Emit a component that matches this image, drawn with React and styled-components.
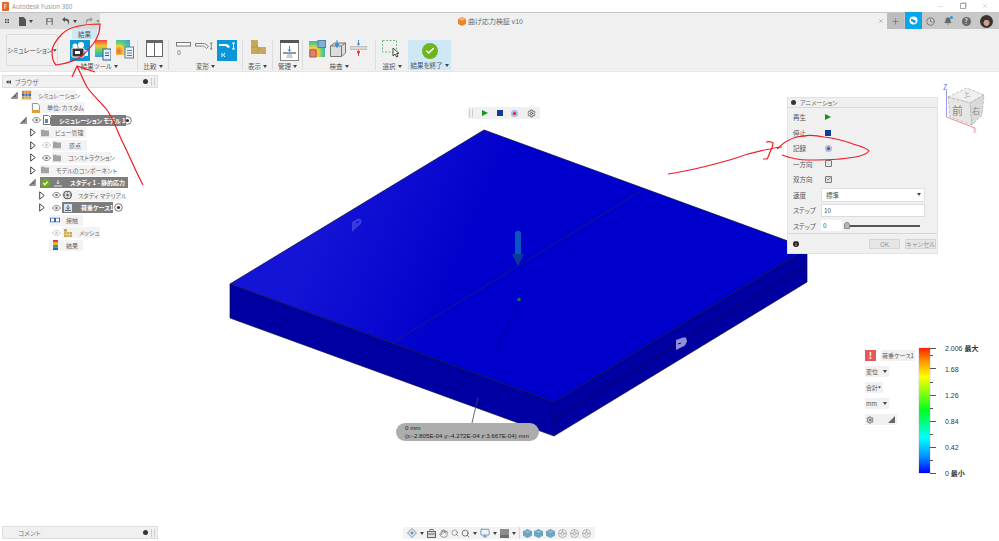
import React from 'react';
import styled, { createGlobalStyle } from 'styled-components';
import { Bell, Check, Clock, Hand, Minus, Monitor, Plus, Search, Settings, X } from 'lucide-react';

const GlobalStyle = createGlobalStyle`
  html, body {
    margin: 0;
    padding: 0;
    background: #fff;
  }
  body {
    font-family: "Noto Sans CJK JP", "Noto Sans", "Liberation Sans", sans-serif;
    font-size: 7px;
    font-feature-settings: "palt";
    color: #555;
    overflow: hidden;
  }
`;

const Caret = () => (
  <svg width="4" height="3" viewBox="0 0 4 3"><path d="M0 0h4L2 3z" fill="#444" /></svg>
);

const Eye = ({ faded }) => (
  <svg width="9" height="6" viewBox="0 0 9 6" opacity={faded ? 0.4 : 1}>
    <path d="M.5 3C2 1 3 .5 4.5.5S7 1 8.5 3C7 5 6 5.500 4.500 5.500S2 5 .5 3z" fill="none" stroke="#777" />
    <circle cx="4.500" cy="3" r="1.300" fill="#777" />
  </svg>
);

const Expander = ({ open }) =>
  open ? (
    <svg width="7" height="7" viewBox="0 0 7 7">
      <path d="M0 6.500L6.500 0v6.500z" fill="#666" stroke="#666" strokeWidth=".4" />
      <path d="M2.500 5.500h3v-3" fill="none" stroke="#ccc" strokeWidth=".5" />
    </svg>
  ) : (
    <svg width="6" height="9" viewBox="0 0 6 9">
      <path d="M.7.8L5.200 4.500.7 8.200z" fill="#fff" stroke="#444" strokeWidth="1" />
    </svg>
  );

const Target = () => (
  <svg width="9" height="9" viewBox="0 0 9 9">
    <circle cx="4.500" cy="4.500" r="3.800" fill="#fff" stroke="#555" strokeWidth=".8" />
    <circle cx="4.500" cy="4.500" r="1.600" fill="#333" />
  </svg>
);

const TreeIcon = ({ kind }) => {
  switch (kind) {
    case 'sim':
      return (
        <svg width="9" height="9" viewBox="0 0 9 9">
          <rect width="9" height="3" fill="#d9822b" />
          <rect y="3" width="9" height="3" fill="#3d6fb0" />
          <rect y="6" width="9" height="3" fill="#c9a53c" />
          <path d="M3 0v9M6 0v9" stroke="#fff" strokeWidth=".6" />
        </svg>
      );
    case 'unit':
      return (
        <svg width="8" height="10" viewBox="0 0 8 10">
          <path d="M.5.500h5l2 2v7h-7z" fill="#fff" stroke="#999" />
          <rect y="7" width="8" height="3" fill="#e0a030" />
        </svg>
      );
    case 'model':
      return (
        <svg width="8" height="10" viewBox="0 0 8 10">
          <path d="M.5.500h5l2 2v7h-7z" fill="#fff" stroke="#777" />
          <rect x="2" y="4" width="3" height="4" fill="#5a86b8" />
        </svg>
      );
    case 'folder':
      return (
        <svg width="8" height="7" viewBox="0 0 8 7">
          <path d="M0 0h3l1 1h4v6H0z" fill="#a3a3a3" />
        </svg>
      );
    case 'check':
      return (
        <svg width="9" height="9" viewBox="0 0 9 9">
          <circle cx="4.500" cy="4.500" r="4.500" fill="#6fae1e" />
          <path d="M2.300 4.600l1.500 1.500 2.900-3" fill="none" stroke="#fff" strokeWidth="1.200" />
        </svg>
      );
    case 'study':
      return (
        <svg width="8" height="8" viewBox="0 0 8 8">
          <path d="M0 7h8" stroke="#eee" strokeWidth="1" />
          <path d="M4 1v3.500M2.800 3.500L4 5l1.200-1.500" stroke="#eee" strokeWidth=".9" fill="none" />
        </svg>
      );
    case 'material':
      return (
        <svg width="9" height="9" viewBox="0 0 9 9">
          <circle cx="4.500" cy="4.500" r="4" fill="#ddd" stroke="#555" />
          <circle cx="4.500" cy="4.500" r="1.200" fill="#555" />
          <path d="M4.500 1v1M4.500 7v1M1 4.500h1M7 4.500h1" stroke="#555" />
        </svg>
      );
    case 'load':
      return (
        <svg width="8" height="8" viewBox="0 0 8 8">
          <rect width="8" height="8" fill="#d8e4ee" />
          <path d="M4 1v4M2.500 3.500L4 5.500l1.500-2" stroke="#2d6db0" fill="none" />
          <rect x="1" y="6" width="6" height="1" fill="#666" />
        </svg>
      );
    case 'contact':
      return (
        <svg width="10" height="5" viewBox="0 0 10 5">
          <rect x=".5" y=".5" width="4" height="4" fill="#fff" stroke="#3d5fb0" />
          <rect x="5.500" y=".5" width="4" height="4" fill="#fff" stroke="#3d5fb0" />
        </svg>
      );
    case 'mesh':
      return (
        <svg width="8" height="8" viewBox="0 0 8 8">
          <path d="M0 0h3v3h5v5H0z" fill="#c9a94f" />
          <path d="M0 3h3M0 5.500h8M3 3v5M5.500 3v5" stroke="#fff" strokeWidth=".4" />
        </svg>
      );
    case 'result':
      return (
        <svg width="5" height="10" viewBox="0 0 5 10">
          <rect width="5" height="2.500" fill="#e23a2e" />
          <rect y="2.500" width="5" height="2.500" fill="#f0b323" />
          <rect y="5" width="5" height="2.500" fill="#3aa655" />
          <rect y="7.500" width="5" height="2.500" fill="#2b5fc0" />
        </svg>
      );
    default:
      return null;
  }
};

const treeRows = [
  { indent: 11, exp: 'open', slot: 10, icon: 'sim', iconAt: 1, labelAt: 17, width: 55, label: 'シミュレーション' },
  { indent: 31, icon: 'unit', iconAt: 1, labelAt: 16, width: 54, label: '単位: カスタム' },
  { indent: 20, exp: 'open', slot: 10, eye: 'on', icon: 'model', iconAt: 1, labelAt: 8, width: 80, label: 'シミュレーション モデル 1', labelDark: true, target: true },
  { indent: 30, exp: 'closed', slot: 10, icon: 'folder', iconAt: 1, labelAt: 15, width: 46, label: 'ビュー管理' },
  { indent: 30, exp: 'closed', slot: 10, eye: 'faded', icon: 'folder', iconAt: 1, labelAt: 17, width: 35, label: '原点' },
  { indent: 30, exp: 'closed', slot: 10, eye: 'on', icon: 'folder', iconAt: 1, labelAt: 16, width: 59, label: 'コンストラクション' },
  { indent: 30, exp: 'closed', slot: 10, icon: 'folder', iconAt: 1, labelAt: 16, width: 70, label: 'モデルのコンポーネント' },
  { indent: 29, exp: 'open', slot: 11, icon: 'check', iconAt: 1, labelAt: 30, width: 88, label: 'スタディ 1 - 静的応力', chipDark: true, extra: 'study' },
  { indent: 39, exp: 'closed', slot: 11, eye: 'on', icon: 'material', iconAt: 1, labelAt: 16, width: 59, label: 'スタディ マテリアル' },
  { indent: 39, exp: 'closed', slot: 11, eye: 'on', icon: 'load', iconAt: 2, labelAt: 19, width: 51, label: '荷重ケース1', chipDark: true, target: true },
  { indent: 49, icon: 'contact', iconAt: 1, labelAt: 17, width: 34, label: '接触' },
  { indent: 50, eye: 'faded', icon: 'mesh', iconAt: 2, labelAt: 17, width: 38, label: 'メッシュ' },
  { indent: 49, icon: 'result', iconAt: 4, labelAt: 17, width: 34, label: '結果' },
];

const ribbonGroups = [
  { width: 76, gap: 5, pad: 8, label: '結果ツール', icons: ['camera', 'rainbowDoc', 'contourDoc'] },
  { width: 31, pad: 8, label: '比較', icons: ['compare'] },
  { width: 74, gap: 4, pad: 7, label: '変形', icons: ['bar0', 'barBent', 'barBlue'] },
  { width: 30, pad: 8, label: '表示', icons: ['tan'] },
  { width: 30, pad: 7, label: '管理', icons: ['manage'] },
  { width: 73, gap: 4, pad: 6, label: '検査', icons: ['contourBox', 'boxArrow', 'section'] },
  { width: 32, pad: 6, label: '選択', icons: ['selectBox'], noBorder: true },
];

const RibbonIcon = ({ kind }) => {
  switch (kind) {
    case 'camera':
      return (
        <svg width="20" height="21" viewBox="0 0 20 21">
          <rect width="20" height="21" fill="#0a96d8" />
          <rect x="2" y="8" width="12" height="9" rx="1" fill="#333" stroke="#fff" />
          <circle cx="5" cy="6" r="2.500" fill="#fff" />
          <circle cx="11" cy="5" r="3" fill="#fff" />
          <rect x="5" y="11" width="5" height="3" fill="#fff" />
          <rect x="15" y="10" width="3" height="6" fill="#fff" />
        </svg>
      );
    case 'rainbowDoc':
      return (
        <svg width="16" height="21" viewBox="0 0 16 21">
          <defs>
            <linearGradient id="rb" x1="0" y1="0" x2="0" y2="1">
              <stop offset="0" stopColor="#f0483a" />
              <stop offset=".35" stopColor="#f7c62f" />
              <stop offset=".65" stopColor="#58d06a" />
              <stop offset="1" stopColor="#2f9ee8" />
            </linearGradient>
          </defs>
          <rect width="12" height="17" fill="url(#rb)" />
          <rect x="8" y="9" width="8" height="11" fill="#e8eef4" stroke="#2d5f98" />
          <path d="M10 13h4M10 15.500h4" stroke="#2d5f98" />
        </svg>
      );
    case 'contourDoc':
      return (
        <svg width="18" height="19" viewBox="0 0 18 19">
          <defs>
            <radialGradient id="ct" cx=".2" cy=".75" r="1">
              <stop offset="0" stopColor="#ef5b3f" />
              <stop offset=".35" stopColor="#f6d03a" />
              <stop offset=".6" stopColor="#59cf7a" />
              <stop offset="1" stopColor="#3aa2e8" />
            </radialGradient>
          </defs>
          <rect width="14" height="15" fill="url(#ct)" />
          <rect x="9" y="7" width="8.500" height="11" fill="#eef2f5" stroke="#5a7f9c" />
          <path d="M11 10.500h5M11 13h5M11 15.500h5" stroke="#5a7f9c" />
        </svg>
      );
    case 'compare':
      return (
        <svg width="17" height="17" viewBox="0 0 17 17">
          <rect x=".5" y=".5" width="16" height="16" fill="#fff" stroke="#666" />
          <rect width="17" height="3" fill="#666" />
          <path d="M8.500 3v14" stroke="#666" />
        </svg>
      );
    case 'bar0':
      return (
        <svg width="15" height="17" viewBox="0 0 15 17">
          <rect x=".5" y="2.500" width="14" height="3.500" fill="#fff" stroke="#777" />
          <text x="1" y="15" fontSize="7" fill="#666">0</text>
        </svg>
      );
    case 'barBent':
      return (
        <svg width="18" height="14" viewBox="0 0 18 14">
          <path d="M.5 3.500h7c3 0 4 1 6 3l-2 2c-2-2-2.500-2.500-4-2.500h-7z" fill="#fff" stroke="#777" />
          <path d="M15 3h2.500M16.200 3v6M15 9h2.500" stroke="#666" strokeWidth=".8" fill="none" />
        </svg>
      );
    case 'barBlue':
      return (
        <svg width="20" height="21" viewBox="0 0 20 21">
          <rect width="20" height="21" fill="#0a96d8" />
          <path d="M2 4h6c3 0 4 1 5 3l-2 1c-1-1-2-2-3-2H2z" fill="#fff" />
          <path d="M15 3h3M16.500 3v6M15 9h3" stroke="#fff" fill="none" />
          <path d="M5 13v4M8 13l-1.500 2L8 17" stroke="#fff" fill="none" />
        </svg>
      );
    case 'tan':
      return (
        <svg width="15" height="14" viewBox="0 0 15 14">
          <path d="M0 0h7v7h8v7H0z" fill="#c9a95c" />
          <path d="M0 0l14 14M0 7h7v7" stroke="#b2934a" fill="none" strokeWidth=".7" />
        </svg>
      );
    case 'manage':
      return (
        <svg width="19" height="21" viewBox="0 0 19 21">
          <rect x=".5" y=".5" width="18" height="20" fill="#fff" stroke="#888" />
          <rect width="19" height="3" fill="#555" />
          <path d="M9.500 6v5M8 9.500l1.500 2 1.500-2" stroke="#2d8fd0" fill="none" />
          <rect x="3" y="12" width="13" height="2" fill="#999" />
          <path d="M6 18l1.500-4h4l1.500 4z" fill="#ccc" />
        </svg>
      );
    case 'contourBox':
      return (
        <svg width="17" height="18" viewBox="0 0 17 18">
          <defs>
            <radialGradient id="cb" cx=".25" cy=".75" r=".9">
              <stop offset="0" stopColor="#ef5b3f" />
              <stop offset=".4" stopColor="#f6d03a" />
              <stop offset=".65" stopColor="#59cf7a" />
              <stop offset="1" stopColor="#3aa2e8" />
            </radialGradient>
          </defs>
          <rect y="1" width="16" height="16" fill="url(#cb)" />
          <rect x="9" y=".5" width="7.500" height="7" fill="#7fb0d8" stroke="#5a7f9c" />
          <rect x="1" y="10" width="6" height="7" fill="#e88070" stroke="#a05a50" />
        </svg>
      );
    case 'boxArrow':
      return (
        <svg width="16" height="17" viewBox="0 0 16 17">
          <path d="M.5 6l4-3h11v10l-4 3.500H.5z" fill="#ddd" stroke="#777" />
          <path d="M.5 6h11v10.500M11.500 6l4-3" fill="none" stroke="#777" />
          <path d="M7 0v6M5 4l2 3.500L9 4z" stroke="#3a8ed0" fill="#3a8ed0" />
        </svg>
      );
    case 'section':
      return (
        <svg width="17" height="17" viewBox="0 0 17 17">
          <path d="M8.500 0v5" stroke="#3a8ed0" />
          <path d="M6.800 3.500L8.500 6l1.700-2.500z" fill="#3a8ed0" />
          <rect y="6.500" width="17" height="3" fill="#d8d8d8" stroke="#999" strokeWidth=".5" />
          <path d="M8.500 10v6" stroke="#c44" />
          <circle cx="8.500" cy="12" r="1.500" fill="#d33" />
        </svg>
      );
    case 'selectBox':
      return (
        <svg width="18" height="18" viewBox="0 0 18 18">
          <rect x=".5" y=".5" width="14" height="11.500" fill="none" stroke="#6cc07a" strokeDasharray="2 1.500" />
          <path d="M11 8l0 8 2-2 1.500 3 1.500-.7-1.500-2.800 2.500-.2z" fill="#fff" stroke="#444" />
        </svg>
      );
    default:
      return null;
  }
};

const NavGlyph = ({ kind }) => {
  switch (kind) {
    case 'orbit':
      return (
        <svg width="10" height="10" viewBox="0 0 10 10">
          <path d="M5 .5L9.500 5 5 9.500.5 5z" fill="#cfe2f2" stroke="#777" strokeWidth=".7" />
          <circle cx="5" cy="5" r="1.300" fill="#5a8fc0" />
        </svg>
      );
    case 'cam':
      return (
        <svg width="9" height="9" viewBox="0 0 9 9">
          <rect x=".5" y="2.500" width="8" height="6" fill="#ddd" stroke="#666" />
          <rect x="3" y=".5" width="3" height="2" fill="none" stroke="#666" />
          <path d="M.5 5h8" stroke="#666" />
        </svg>
      );
    case 'screen':
      return (
        <svg width="9" height="9" viewBox="0 0 9 9">
          <rect width="9" height="9" fill="#8c8c8c" />
          <rect y="6" width="9" height="3" fill="#6f6f6f" />
        </svg>
      );
    case 'cube':
      return (
        <svg width="9" height="9" viewBox="0 0 9 9">
          <path d="M4.500 0L9 2.200v4.600L4.500 9 0 6.800V2.200z" fill="#6ea5bf" />
          <path d="M0 2.200l4.500 2.200L9 2.200" fill="#9cc4d6" stroke="#4d8aa8" strokeWidth=".4" />
        </svg>
      );
    case 'view':
      return (
        <svg width="9" height="9" viewBox="0 0 9 9">
          <circle cx="4.500" cy="4.500" r="4" fill="none" stroke="#999" strokeWidth=".7" />
          <circle cx="4.500" cy="4.500" r="1.600" fill="none" stroke="#999" strokeWidth=".7" />
          <path d="M4.500 .5v3M.5 4.500h3M8.500 4.500h-3" stroke="#999" strokeWidth=".6" />
        </svg>
      );
    default:
      return null;
  }
};

const Model = () => (
  <ModelSvg viewBox="0 72 999 469">
    <defs>
      <linearGradient id="topFace" gradientUnits="userSpaceOnUse" x1="300" y1="270" x2="440" y2="330">
        <stop offset="0" stopColor="#1414d6" />
        <stop offset="1" stopColor="#0000cc" />
      </linearGradient>
    </defs>
    <path d="M230 284L230 318 554 436 807 282 807 248 554 402z" fill="#0000a2" stroke="#10104a" strokeWidth=".7" />
    <path d="M230 284L484 130 807 248 554 402z" fill="url(#topFace)" stroke="#10104a" strokeWidth=".8" />
    <path d="M554 402v34M554 419L807 265" stroke="#10104a" strokeWidth=".7" fill="none" />
    <path d="M392 343L641 191" stroke="#202068" strokeWidth=".8" />
    <path d="M352 232V222L358 218.500C362 218 362 222 361 224L356 228z" fill="#3a3ae0" />
    <path d="M356 223l3-1.500" stroke="#0000cc" />
    <path d="M676 350V340L683 337.500H686L687 341.500 685 345.500z" fill="#8f8fd6" />
    <path d="M678 344l3-1" stroke="#0000a2" />
    <path d="M519 299L497 352" stroke="#00008c" strokeWidth=".7" />
    <path d="M478 397L472 423" stroke="#444" strokeWidth=".8" />
    <rect x="515" y="231" width="6" height="26" rx="2" fill="#0b55c2" />
    <path d="M512 254h12l-6 12z" fill="#083a9a" />
    <circle cx="519" cy="299.500" r="1.800" fill="#0f7a50" />
  </ModelSvg>
);

const Markup = () => (
  <MarkupSvg viewBox="0 0 999 541" fill="none" stroke="#ee1c25" strokeWidth="1.200">
    <path d="M100 24C88 24 70 26 62 34 56 40 52 47 52 52 52 60 55 64 56 65 66 64 78 60 84 54 92 46 100 38 100 24z" />
    <path d="M72 77L77 66 95 72M77 66C80 72 84 82 87 87 93 96 101 102 107 110 114 120 118 133 123 143 130 157 136 172 143 185" />
    <path d="M668 174C690 171 712 165 733 159 746 154 758 151 770 149 774 148 778 147 782 147" />
    <path d="M766 142C770 141 772 142 773 143 773 147 771 150 770 152 769 155 768 158 767 159L763 159" />
    <path d="M777 149C783 143 788 139 797 137 805 135 815 135 824 137 834 138 845 141 853 144 860 146 868 149 869 151 866 155 858 157 848 158 836 160 822 160 808 160 798 160 790 158 782 155" />
  </MarkupSvg>
);

const App = () => (
  <Page>
    <GlobalStyle />
    <TitleBar>
      <AppLogo>F</AppLogo>
      <AppName>Autodesk Fusion 360</AppName>
      <WindowControls>
        <Minus size={7} strokeWidth={1} />
        <RestoreBox />
        <X size={8} strokeWidth={1} />
      </WindowControls>
    </TitleBar>

    <TabStrip>
      <QuickBar>
        <svg width="8" height="8" viewBox="0 0 8 8" fill="#444">
          <rect width="2" height="2" /><rect x="3" width="2" height="2" /><rect x="6" width="2" height="2" />
          <rect y="3" width="2" height="2" /><rect x="3" y="3" width="2" height="2" /><rect x="6" y="3" width="2" height="2" />
          <rect y="6" width="2" height="2" /><rect x="3" y="6" width="2" height="2" /><rect x="6" y="6" width="2" height="2" />
        </svg>
        <QuickItem $left={10}>
          <svg width="7" height="9" viewBox="0 0 7 9"><path d="M0 0h4.500L7 2.500V9H0z" fill="#555" /></svg>
          <Caret />
        </QuickItem>
        <QuickItem $left={13}>
          <svg width="7" height="7" viewBox="0 0 7 7"><rect width="7" height="7" fill="#8a8a8a" /><rect x="2" y="1" width="3" height="2" fill="#ddd" /><rect x="1.500" y="4" width="4" height="3" fill="#ddd" /></svg>
        </QuickItem>
        <QuickItem $left={9}>
          <svg width="8" height="8" viewBox="0 0 8 8"><path d="M3 0L0 2.500 3 5V3.500C5 3.500 6.500 4.500 6.500 8 8 5 7.500 1.500 3 1.500z" fill="#555" /></svg>
          <Caret />
        </QuickItem>
        <QuickItem $left={8} $faded>
          <svg width="8" height="8" viewBox="0 0 8 8"><path d="M5 0l3 2.500L5 5V3.500C3 3.500 1.500 4.500 1.500 8 0 5 .5 1.500 5 1.500z" fill="#555" /></svg>
          <Caret />
        </QuickItem>
      </QuickBar>
      <DocTab>
        <DocTitle>
          <svg width="8" height="9" viewBox="0 0 8 9">
            <path d="M4 0l4 2v5L4 9 0 7V2z" fill="#e8862e" />
            <path d="M0 2l4 2 4-2-4-2z" fill="#f5b06a" />
          </svg>
          曲げ応力検証 v10
        </DocTitle>
        <TabClose><X size={6} strokeWidth={1.500} /></TabClose>
      </DocTab>
      <AccountBar>
        <AddTab><Plus size={9} strokeWidth={2} /></AddTab>
        <BlueTool>
          <svg width="9" height="9" viewBox="0 0 9 9">
            <circle cx="4.500" cy="4.500" r="4" fill="#fff" />
            <path d="M2 2.500l4.500 2v3L2 5z" fill="#0aa0e6" />
          </svg>
        </BlueTool>
        <AccountIcons>
          <Clock size={9} strokeWidth={2} />
          <BellWrap>
            <Bell size={8} strokeWidth={2} fill="#666" />
            <BellDot />
          </BellWrap>
          <HelpMark>?</HelpMark>
          <Avatar />
        </AccountIcons>
      </AccountBar>
    </TabStrip>

    <Ribbon>
      <WorkspaceButton>
        シミュレーション <Caret />
      </WorkspaceButton>
      {ribbonGroups.map(group => (
        <RibbonGroup key={group.label} $width={group.width} $noBorder={group.noBorder}>
          <RibbonIcons $gap={group.gap} $pad={group.pad}>
            {group.icons.map(icon => <RibbonIcon key={icon} kind={icon} />)}
          </RibbonIcons>
          <RibbonLabel>{group.label} <Caret /></RibbonLabel>
        </RibbonGroup>
      ))}
      <FinishGroup>
        <FinishIcon><Check size={10} strokeWidth={3.500} color="#fff" /></FinishIcon>
        <RibbonLabel>結果を終了 <Caret /></RibbonLabel>
      </FinishGroup>
      <ResultTip>結果</ResultTip>
    </Ribbon>

    <Canvas>
      <Model />

      <BrowserPanel>
        <PanelBar>
          <PanelTitle>
            <svg width="5" height="4" viewBox="0 0 5 4"><path d="M2.500 0v4L0 2zM5 0v4L2.500 2z" fill="#444" /></svg>
            ブラウザ
          </PanelTitle>
          <PanelGrip>
            <PanelDot />
            <GripLine />
          </PanelGrip>
        </PanelBar>
        <Tree>
          {treeRows.map(row => (
            <TreeRow key={row.label} $indent={row.indent}>
              {row.exp && <ExpanderSlot $width={row.slot}><Expander open={row.exp === 'open'} /></ExpanderSlot>}
              {row.eye && <EyeSlot><Eye faded={row.eye === 'faded'} /></EyeSlot>}
              <Chip $width={row.width} $dark={row.chipDark}>
                <ChipIcon $at={row.iconAt}><TreeIcon kind={row.icon} /></ChipIcon>
                {row.extra && <ChipExtra><TreeIcon kind={row.extra} /></ChipExtra>}
                <ChipLabel $at={row.labelAt} $dark={row.labelDark} $light={row.chipDark || row.labelDark}>
                  {row.label}
                </ChipLabel>
              </Chip>
              {row.target && <TargetSlot><Target /></TargetSlot>}
            </TreeRow>
          ))}
        </Tree>
      </BrowserPanel>

      <PlayBar>
        <GripLine />
        <PlayIcon />
        <StopIcon />
        <RecordIcon />
        <Settings size={9} strokeWidth={2.500} color="#555" />
      </PlayBar>

      <AnimationDialog>
        <DialogHeader>
          <PanelDot />
          アニメーション
        </DialogHeader>
        <DialogBody>
          <DialogRow $height={16}><RowLabel>再生</RowLabel><PlayIcon /></DialogRow>
          <DialogRow $height={15}><RowLabel>停止</RowLabel><StopIcon /></DialogRow>
          <DialogRow $height={16}><RowLabel>記録</RowLabel><RecordIcon /></DialogRow>
          <DialogRow $height={15}><RowLabel>一方向</RowLabel><CheckBox /></DialogRow>
          <DialogRow $height={16}>
            <RowLabel>双方向</RowLabel>
            <CheckBox><Check size={6} strokeWidth={3} color="#333" /></CheckBox>
          </DialogRow>
          <DialogRow $height={15}>
            <RowLabel $narrow>速度</RowLabel>
            <SelectBox>標準<Caret /></SelectBox>
          </DialogRow>
          <DialogRow $height={16}>
            <RowLabel $narrow>ステップ</RowLabel>
            <TextBox>10</TextBox>
          </DialogRow>
          <DialogRow $height={15}>
            <RowLabel $narrow>ステップ</RowLabel>
            <SliderValue>0</SliderValue>
            <Slider>
              <SliderThumb />
            </Slider>
          </DialogRow>
        </DialogBody>
        <DialogFooter>
          <InfoDot>i</InfoDot>
          <DialogButton $width={31}>OK</DialogButton>
          <DialogButton $width={31}>キャンセル</DialogButton>
        </DialogFooter>
      </AnimationDialog>

      <ViewCube viewBox="940 80 50 54">
        <path d="M948 97L967 88 984 95 970 103z" fill="#efefef" stroke="#aaa" strokeDasharray="3 1.500" strokeWidth=".7" />
        <path d="M948 97L970 103 972 125 950 117z" fill="#e6e6e6" stroke="#aaa" strokeDasharray="3 1.500" strokeWidth=".7" />
        <path d="M970 103L984 95 982 115 972 125z" fill="#dadada" stroke="#aaa" strokeDasharray="3 1.500" strokeWidth=".7" />
        <path d="M946.500 90V117" fill="none" stroke="#9a9af0" strokeWidth="1" />
        <path d="M946.500 117L975 128" fill="none" stroke="#ee8a8a" strokeWidth="1" />
        <text x="943" y="90" fontSize="7" fill="#6a6af0">Z</text>
        <text x="973" y="133" fontSize="6" fill="#ee8a8a">X</text>
        <text x="963" y="97" fontSize="7" fill="#999" transform="rotate(-18 967 94)">上</text>
        <text x="952" y="115" fontSize="11" fill="#888">前</text>
        <text x="972" y="114" fontSize="8" fill="#888">右</text>
      </ViewCube>

      <ProbeTip>
        <div>0 mm</div>
        <div>(x:-2.805E-04 y:-4.272E-04 z:3.667E-04) mm</div>
      </ProbeTip>

      <Legend>
        <LegendControls>
          <LegendTop>
            <AlertBox>!</AlertBox>
            <LegendChip $width={34}>荷重ケース1<Caret /></LegendChip>
          </LegendTop>
          <LegendChip $width={24}>変位<Caret /></LegendChip>
          <LegendChip $width={18}>合計<Caret /></LegendChip>
          <LegendChip $width={24}>mm<Caret /></LegendChip>
          <LegendChip $width={32}>
            <Settings size={8} strokeWidth={2.500} color="#555" />
            <svg width="7" height="7" viewBox="0 0 7 7"><path d="M0 7L7 0v7z" fill="#666" /></svg>
          </LegendChip>
        </LegendControls>
        <ColorBar />
        <svg width="6" height="126" viewBox="0 0 6 126" stroke="#555">
          {[0, 7, 20, 34, 47, 60, 73, 86, 99, 112, 125].map((y, i) => (
            <path key={y} d={`M0 ${y + 0.5}h${i % 2 === 0 ? 6 : 3}`} />
          ))}
        </svg>
        <Scale>
          <ScaleMark $height={20.500}>2.006 <b>最大</b></ScaleMark>
          <ScaleMark $height={26.500}>1.68</ScaleMark>
          <ScaleMark $height={26}>1.26</ScaleMark>
          <ScaleMark $height={26}>0.84</ScaleMark>
          <ScaleMark $height={26}>0.42</ScaleMark>
          <ScaleMark $height={0}>0 <b>最小</b></ScaleMark>
        </Scale>
      </Legend>

      <CommentPanel>
        <PanelBar>
          <PanelTitle $indent={12}>コメント</PanelTitle>
          <PanelGrip>
            <PanelDot />
            <GripLine />
          </PanelGrip>
        </PanelBar>
      </CommentPanel>

      <NavBar>
        <NavGlyph kind="orbit" /><Caret />
        <NavGlyph kind="cam" />
        <Hand size={9} strokeWidth={1.500} color="#555" />
        <Search size={8} strokeWidth={1.500} color="#555" />
        <Search size={9} strokeWidth={2} color="#555" /><Caret />
        <Monitor size={10} strokeWidth={2} color="#5a86b8" /><Caret />
        <NavGlyph kind="screen" /><Caret />
        <NavDivider />
        <NavGlyph kind="cube" />
        <NavGlyph kind="cube" />
        <NavGlyph kind="cube" />
        <NavGlyph kind="view" />
        <NavGlyph kind="view" />
        <NavGlyph kind="view" />
      </NavBar>
    </Canvas>

    <Markup />
  </Page>
);

export default App;

const Page = styled.div`
  position: relative;
  width: 999px;
  height: 541px;
  display: flex;
  flex-direction: column;
  overflow: hidden;
`;

const TitleBar = styled.div`
  height: 12px;
  display: flex;
  align-items: center;
  padding-left: 2px;
  background: #fff;
`;

const AppLogo = styled.div`
  width: 7px;
  height: 9px;
  background: #e8622a;
  color: #fff;
  font-size: 6px;
  line-height: 9px;
  text-align: center;
  border-radius: 1px;
`;

const AppName = styled.span`
  margin-left: 3px;
  font-size: 6.200px;
  color: #999;
  font-family: "Noto Sans", sans-serif;
`;

const WindowControls = styled.div`
  margin-left: auto;
  width: 52px;
  margin-right: 10px;
  display: flex;
  justify-content: space-between;
  align-items: center;
  color: #999;
`;

const RestoreBox = styled.div`
  width: 4px;
  height: 4px;
  border: 1px solid #aaa;
  box-shadow: 1px -1px 0 -0.500px #aaa;
`;

const TabStrip = styled.div`
  height: 17px;
  display: flex;
  background: #d4d4d4;
  border-top: 1px solid #c4c4c4;
  box-sizing: border-box;
`;

const QuickBar = styled.div`
  width: 100px;
  display: flex;
  align-items: center;
  padding-left: 5px;
  box-sizing: border-box;
  background: #d9d9d9;
`;

const QuickItem = styled.div`
  display: flex;
  align-items: center;
  gap: 3px;
  margin-left: ${p => p.$left}px;
  opacity: ${p => (p.$faded ? 0.45 : 1)};
`;

const DocTab = styled.div`
  position: relative;
  flex: 1;
  display: flex;
  align-items: center;
  justify-content: center;
  padding-right: 6px;
  background: #f0f0f0;
`;

const DocTitle = styled.div`
  display: flex;
  align-items: center;
  gap: 2px;
  font-size: 7px;
  color: #666;
`;

const TabClose = styled.div`
  position: absolute;
  right: 3px;
  top: 5px;
  display: flex;
  color: #666;
`;

const AccountBar = styled.div`
  width: 112px;
  display: flex;
  background: #c8c8c8;
`;

const AddTab = styled.div`
  width: 17px;
  display: flex;
  align-items: center;
  justify-content: center;
  background: #bdbdbd;
  color: #777;
`;

const BlueTool = styled.div`
  width: 17px;
  margin: -1px 0 0 1px;
  display: flex;
  align-items: center;
  justify-content: center;
  background: #0aa6ec;
`;

const AccountIcons = styled.div`
  flex: 1;
  display: flex;
  align-items: center;
  justify-content: space-between;
  padding: 0 6px 0 4px;
  color: #666;
`;

const BellWrap = styled.div`
  position: relative;
  display: flex;
`;

const BellDot = styled.span`
  position: absolute;
  right: -1px;
  top: -1px;
  width: 3px;
  height: 3px;
  border-radius: 50%;
  background: #0aa6ec;
`;

const HelpMark = styled.div`
  width: 9px;
  height: 9px;
  border-radius: 50%;
  background: #666;
  color: #ddd;
  font-size: 7px;
  font-weight: 700;
  line-height: 9px;
  text-align: center;
`;

const Avatar = styled.div`
  width: 13px;
  height: 13px;
  border-radius: 50%;
  background: radial-gradient(circle at 50% 60%, #c9a08a 0 28%, #3b3230 32%);
`;

const Ribbon = styled.div`
  position: relative;
  height: 43px;
  display: flex;
  align-items: stretch;
  padding-left: 6px;
  background: #f0f0f0;
  border-bottom: 1px solid #e6e6e6;
  box-sizing: border-box;
`;

const WorkspaceButton = styled.div`
  width: 52px;
  height: 32px;
  margin: 5px 4px 0 0;
  display: flex;
  align-items: center;
  justify-content: center;
  gap: 1px;
  flex-shrink: 0;
  box-sizing: border-box;
  border: 1px solid #dcdcdc;
  border-radius: 2px;
  font-size: 6.500px;
  color: #444;
  white-space: nowrap;
`;

const RibbonGroup = styled.div`
  width: ${p => p.$width}px;
  margin: 11px 0 1px;
  display: flex;
  flex-direction: column;
  justify-content: space-between;
  flex-shrink: 0;
  box-sizing: border-box;
  border-right: ${p => (p.$noBorder ? 'none' : '1px solid #dcdcdc')};
`;

const RibbonIcons = styled.div`
  display: flex;
  align-items: flex-start;
  gap: ${p => p.$gap || 0}px;
  padding-left: ${p => p.$pad}px;
`;

const RibbonLabel = styled.div`
  display: flex;
  align-items: center;
  justify-content: center;
  gap: 2px;
  height: 8px;
  font-size: 6.500px;
  color: #555;
  white-space: nowrap;
`;

const FinishGroup = styled.div`
  width: 43px;
  margin: 11px 0 1px 0;
  padding: 3px 0 1px;
  display: flex;
  flex-direction: column;
  align-items: center;
  justify-content: space-between;
  flex-shrink: 0;
  box-sizing: border-box;
  background: #cfe8f5;
`;

const FinishIcon = styled.div`
  width: 16px;
  height: 16px;
  display: flex;
  align-items: center;
  justify-content: center;
  border-radius: 50%;
  background: #6fb51e;
`;

const ResultTip = styled.div`
  position: absolute;
  left: 72px;
  top: 0;
  width: 25px;
  height: 10px;
  background: #cfe8f5;
  color: #555;
  font-size: 6.500px;
  line-height: 10px;
  text-align: center;
`;

const Canvas = styled.div`
  position: relative;
  flex: 1;
  background: #fff;
`;

const ModelSvg = styled.svg`
  position: absolute;
  left: 0;
  top: 0;
  width: 999px;
  height: 469px;
`;

const MarkupSvg = styled.svg`
  position: absolute;
  left: 0;
  top: 0;
  width: 999px;
  height: 541px;
  pointer-events: none;
`;

const BrowserPanel = styled.div`
  position: absolute;
  left: 2px;
  top: 3px;
  width: 156px;
`;

const PanelBar = styled.div`
  height: 13px;
  display: flex;
  align-items: center;
  justify-content: space-between;
  box-sizing: border-box;
  padding: 0 2px 0 3px;
  background: #f0f0f0;
  border: 1px solid #dedede;
`;

const PanelTitle = styled.div`
  display: flex;
  align-items: center;
  gap: 4px;
  padding-left: ${p => p.$indent || 0}px;
  font-size: 6.500px;
  color: #777;
`;

const PanelGrip = styled.div`
  display: flex;
  align-items: center;
  gap: 3px;
`;

const PanelDot = styled.span`
  width: 5px;
  height: 5px;
  border-radius: 50%;
  background: #333;
`;

const GripLine = styled.span`
  width: 2px;
  height: 8px;
  border-left: 1px solid #ccc;
  border-right: 1px solid #ccc;
`;

const Tree = styled.div`
  margin-top: 1px;
  margin-left: -2px;
`;

const TreeRow = styled.div`
  height: 12.500px;
  display: flex;
  align-items: center;
  padding-left: ${p => p.$indent}px;
`;

const ExpanderSlot = styled.div`
  width: ${p => p.$width}px;
  display: flex;
  align-items: center;
`;

const EyeSlot = styled.div`
  width: 12px;
  display: flex;
  justify-content: center;
  align-items: center;
`;

const Chip = styled.div`
  position: relative;
  width: ${p => p.$width}px;
  height: 11px;
  display: flex;
  align-items: center;
  background: ${p => (p.$dark ? '#7d7d7d' : '#f3f3f3')};
`;

const ChipIcon = styled.div`
  position: absolute;
  left: ${p => p.$at}px;
  top: 50%;
  transform: translateY(-50%);
  display: flex;
`;

const ChipExtra = styled.div`
  position: absolute;
  left: 14px;
  top: 50%;
  transform: translateY(-50%);
  display: flex;
`;

const ChipLabel = styled.div`
  height: 100%;
  flex: 1;
  margin-left: ${p => (p.$dark ? 9 : p.$at)}px;
  padding-left: ${p => (p.$dark ? 8 : 0)}px;
  background: ${p => (p.$dark ? '#7d7d7d' : 'transparent')};
  color: ${p => (p.$light ? '#fff' : '#666')};
  font-size: 6px;
  font-weight: ${p => (p.$light ? 700 : 400)};
  line-height: 11px;
  white-space: nowrap;
`;

const TargetSlot = styled.div`
  margin-left: 1px;
  display: flex;
`;

const PlayBar = styled.div`
  position: absolute;
  left: 468px;
  top: 35px;
  width: 72px;
  height: 12px;
  display: flex;
  align-items: center;
  justify-content: space-between;
  box-sizing: border-box;
  padding: 0 4px 0 1px;
  background: #f0f0f0;
`;

const PlayIcon = styled.span`
  width: 0;
  height: 0;
  border-left: 6px solid #11961a;
  border-top: 3.500px solid transparent;
  border-bottom: 3.500px solid transparent;
`;

const StopIcon = styled.span`
  width: 6px;
  height: 6px;
  background: #0d3b9c;
`;

const RecordIcon = styled.span`
  width: 7px;
  height: 7px;
  box-sizing: border-box;
  border-radius: 50%;
  border: 2px solid #9fc0ec;
  background: #ec1c24;
`;

const AnimationDialog = styled.div`
  position: absolute;
  left: 787px;
  top: 25px;
  width: 151px;
  height: 157px;
  display: flex;
  flex-direction: column;
  box-sizing: border-box;
  background: #f0f0f0;
  border: 1px solid #e2e2e2;
`;

const DialogHeader = styled.div`
  height: 10px;
  display: flex;
  align-items: center;
  gap: 4px;
  padding-left: 3px;
  box-sizing: border-box;
  font-size: 6px;
  color: #666;
  border-bottom: 1px solid #d8d8d8;
  flex-shrink: 0;
`;

const DialogBody = styled.div`
  flex: 1;
  padding-top: 1px;
`;

const DialogRow = styled.div`
  height: ${p => p.$height}px;
  display: flex;
  align-items: center;
  padding-left: 5px;
`;

const RowLabel = styled.div`
  width: ${p => (p.$narrow ? 28 : 32)}px;
  flex-shrink: 0;
  font-size: 6.500px;
  color: #555;
  white-space: nowrap;
`;

const CheckBox = styled.div`
  width: 7px;
  height: 7px;
  display: flex;
  align-items: center;
  justify-content: center;
  box-sizing: border-box;
  border: 1px solid #777;
  border-radius: 1px;
  background: #e4e4e4;
`;

const SelectBox = styled.div`
  width: 104px;
  height: 14px;
  display: flex;
  align-items: center;
  justify-content: space-between;
  box-sizing: border-box;
  padding: 0 3px 0 4px;
  background: #fff;
  border: 1px solid #e0e0e0;
  font-size: 6.500px;
  color: #555;
`;

const TextBox = styled.div`
  width: 104px;
  height: 13px;
  box-sizing: border-box;
  padding-left: 2px;
  background: #fff;
  border: 1px solid #dcdcdc;
  font-size: 6.500px;
  line-height: 11px;
  color: #555;
`;

const SliderValue = styled.div`
  width: 21px;
  height: 11px;
  box-sizing: border-box;
  padding-left: 2px;
  background: #fff;
  font-size: 6.500px;
  line-height: 11px;
  color: #555;
`;

const Slider = styled.div`
  position: relative;
  width: 74px;
  height: 2px;
  margin-left: 4px;
  background: #555;
`;

const SliderThumb = styled.span`
  position: absolute;
  left: -2px;
  top: -3px;
  width: 6px;
  height: 7px;
  border-radius: 3px 3px 1px 1px;
  background: #b8b8b8;
  border: 1px solid #888;
  box-sizing: border-box;
`;

const DialogFooter = styled.div`
  height: 19px;
  display: flex;
  align-items: center;
  gap: 5px;
  padding: 0 1px 0 5px;
  border-top: 1px solid #d8d8d8;
  flex-shrink: 0;
`;

const InfoDot = styled.div`
  width: 6px;
  height: 6px;
  margin-right: auto;
  border-radius: 50%;
  background: #222;
  color: #fff;
  font-size: 5px;
  line-height: 6px;
  text-align: center;
`;

const DialogButton = styled.div`
  width: ${p => p.$width}px;
  height: 10px;
  box-sizing: border-box;
  background: #e6e6e6;
  border: 1px solid #d4d4d4;
  color: #999;
  font-size: 6.500px;
  line-height: 8px;
  text-align: center;
  white-space: nowrap;
`;

const ViewCube = styled.svg`
  position: absolute;
  left: 940px;
  top: 8px;
  width: 50px;
  height: 54px;
  font-family: "Noto Sans CJK JP", sans-serif;
`;

const ProbeTip = styled.div`
  position: absolute;
  left: 396px;
  top: 351px;
  width: 143px;
  height: 18px;
  box-sizing: border-box;
  padding: 1px 0 0 9px;
  border-radius: 9px;
  background: #adadad;
  color: #222;
  font-family: "Liberation Sans", sans-serif;
  font-size: 6.200px;
  line-height: 7.500px;
  white-space: nowrap;
`;

const Legend = styled.div`
  position: absolute;
  left: 865px;
  top: 276px;
  display: flex;
  align-items: flex-start;
`;

const LegendControls = styled.div`
  width: 54px;
  display: flex;
  flex-direction: column;
  align-items: flex-start;
  gap: 5px;
  padding-top: 2px;
`;

const LegendTop = styled.div`
  display: flex;
  gap: 5px;
`;

const AlertBox = styled.div`
  width: 11px;
  height: 11px;
  background: #e8585a;
  color: #fff;
  font-size: 9px;
  font-weight: 700;
  line-height: 11px;
  text-align: center;
`;

const LegendChip = styled.div`
  width: ${p => p.$width}px;
  height: 11px;
  display: flex;
  align-items: center;
  justify-content: space-between;
  box-sizing: border-box;
  padding: 0 2px 0 1px;
  background: #f1f1f1;
  font-size: 6px;
  color: #555;
  white-space: nowrap;
`;

const ColorBar = styled.div`
  width: 11px;
  height: 125px;
  background: linear-gradient(
    to bottom,
    #ff2000 0%,
    #ff9000 10%,
    #ffff00 23%,
    #00ff20 50%,
    #00ffff 72%,
    #0090ff 87%,
    #0000ff 100%
  );
  box-shadow: 0 0 1px #888;
`;

const Scale = styled.div`
  margin-left: 9px;
  display: flex;
  flex-direction: column;
`;

const ScaleMark = styled.div`
  height: ${p => p.$height}px;
  font-family: "Liberation Sans", "Noto Sans CJK JP", sans-serif;
  font-size: 7px;
  line-height: 1;
  color: #333;
  white-space: nowrap;
  transform: translateY(-3px);
`;

const CommentPanel = styled.div`
  position: absolute;
  left: 2px;
  top: 454px;
  width: 156px;
`;

const NavBar = styled.div`
  position: absolute;
  left: 403px;
  top: 455px;
  width: 192px;
  height: 12px;
  display: flex;
  align-items: center;
  justify-content: space-between;
  box-sizing: border-box;
  padding: 0 4px;
  background: #f2f2f2;
`;

const NavDivider = styled.span`
  width: 1px;
  height: 12px;
  background: #d8d8d8;
`;
